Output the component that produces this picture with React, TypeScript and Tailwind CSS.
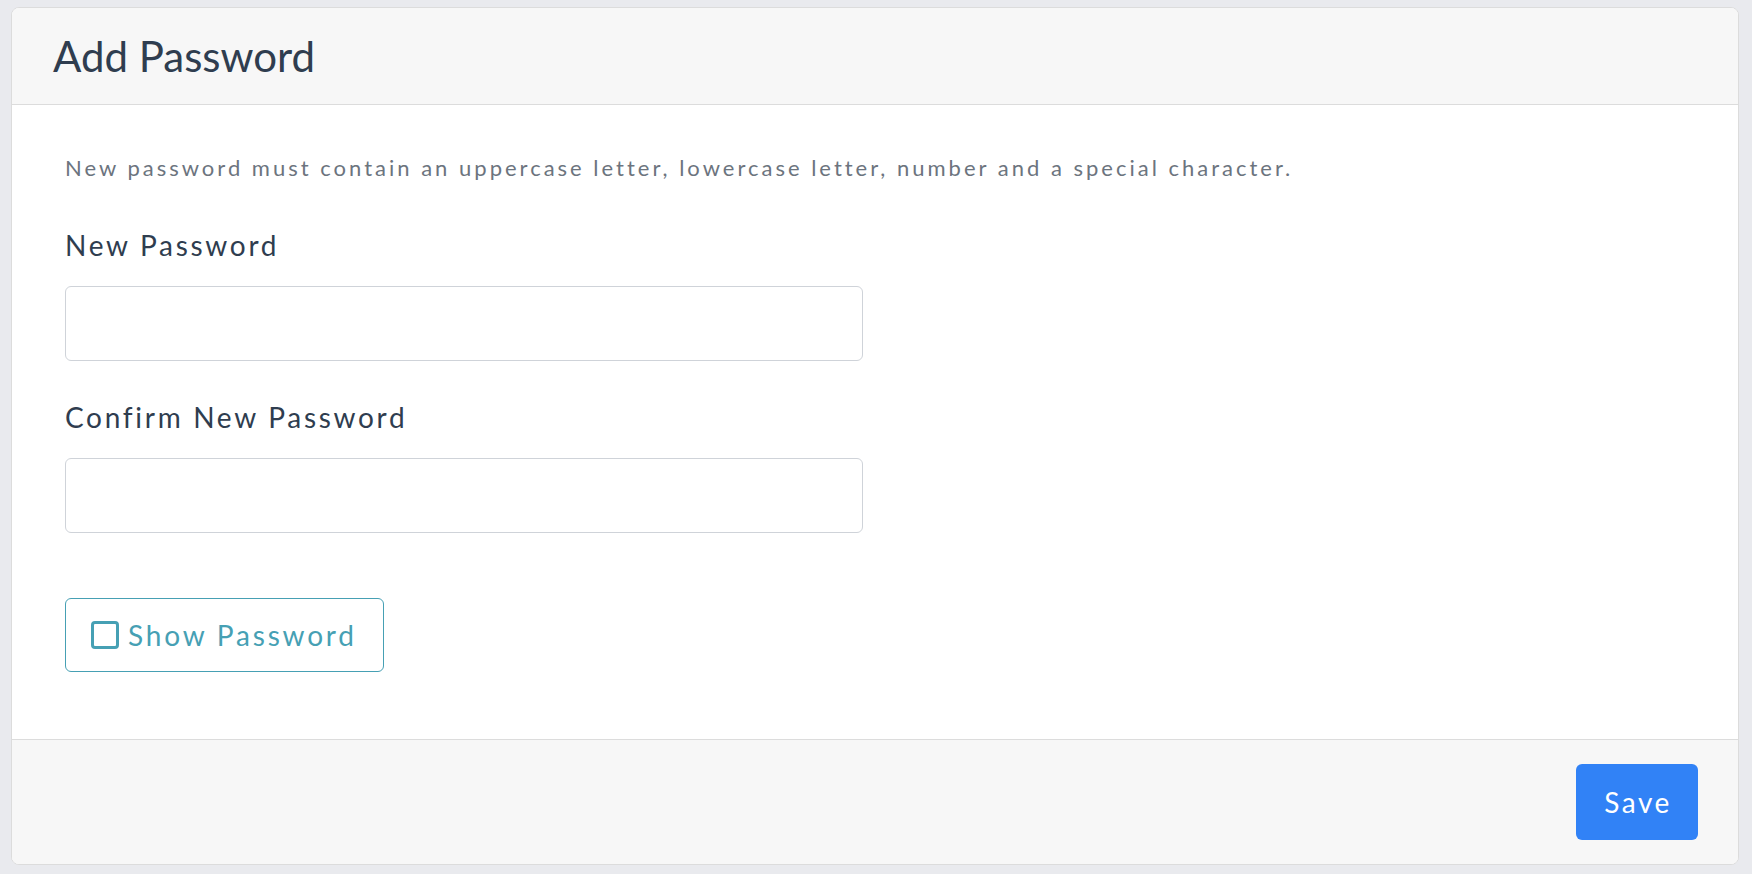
import { useState } from 'react'

const FONT = 'font-["Lato","Open_Sans",sans-serif]'

function Field({ label, className }: { label: string; className?: string }) {
  return (
    <div className={className}>
      <label className="block text-[28px] leading-[40px] tracking-[2.7px] text-[#2f3d4f]">{label}</label>
      <input
        type="password"
        className="mt-[21px] block h-[75px] w-[798px] rounded-[6px] border border-[#cfd3d9] bg-white px-4 text-[24px] outline-none"
      />
    </div>
  )
}

export default function App() {
  const [show, setShow] = useState(false)

  return (
    <div className={`min-h-screen bg-[#e9eaee] pt-[7px] pl-[11px] pr-[13px] pb-[10px] ${FONT}`}>
      <div className="overflow-hidden rounded-[8px] border border-[#dcdcdc] bg-white">
        <div className="flex h-[97px] items-center border-b border-[#dcdcdc] bg-[#f7f7f7] pl-[41px]">
          <h1 className="text-[42px] leading-none text-[#2f3d4f]">Add Password</h1>
        </div>

        <div className="h-[634px] pl-[53px] pt-[46px]">
          <p className="text-[22px] leading-[33px] tracking-[3px] text-[#6c747e]">
            New password must contain an uppercase letter, lowercase letter, number and a special character.
          </p>
          <Field label="New Password" className="mt-[41px]" />
          <Field label="Confirm New Password" className="mt-[36px]" />
          <button
            onClick={() => setShow(!show)}
            className="mt-[65px] flex h-[74px] w-[319px] items-center gap-[9px] rounded-[6px] border border-[#46a0b4] pl-[25px] text-[28px] tracking-[2.8px] text-[#46a0b4]"
          >
            <span className="h-[28px] w-[28px] rounded-[4px] border-[3px] border-[#46a0b4]" />
            Show Password
          </button>
        </div>

        <div className="flex h-[125px] items-center justify-end border-t border-[#dcdcdc] bg-[#f7f7f7] pr-[40px]">
          <button className="h-[76px] w-[122px] rounded-[6px] bg-[#3182f6] pl-[2px] text-[28px] tracking-[2.5px] text-white">Save</button>
        </div>
      </div>
    </div>
  )
}
